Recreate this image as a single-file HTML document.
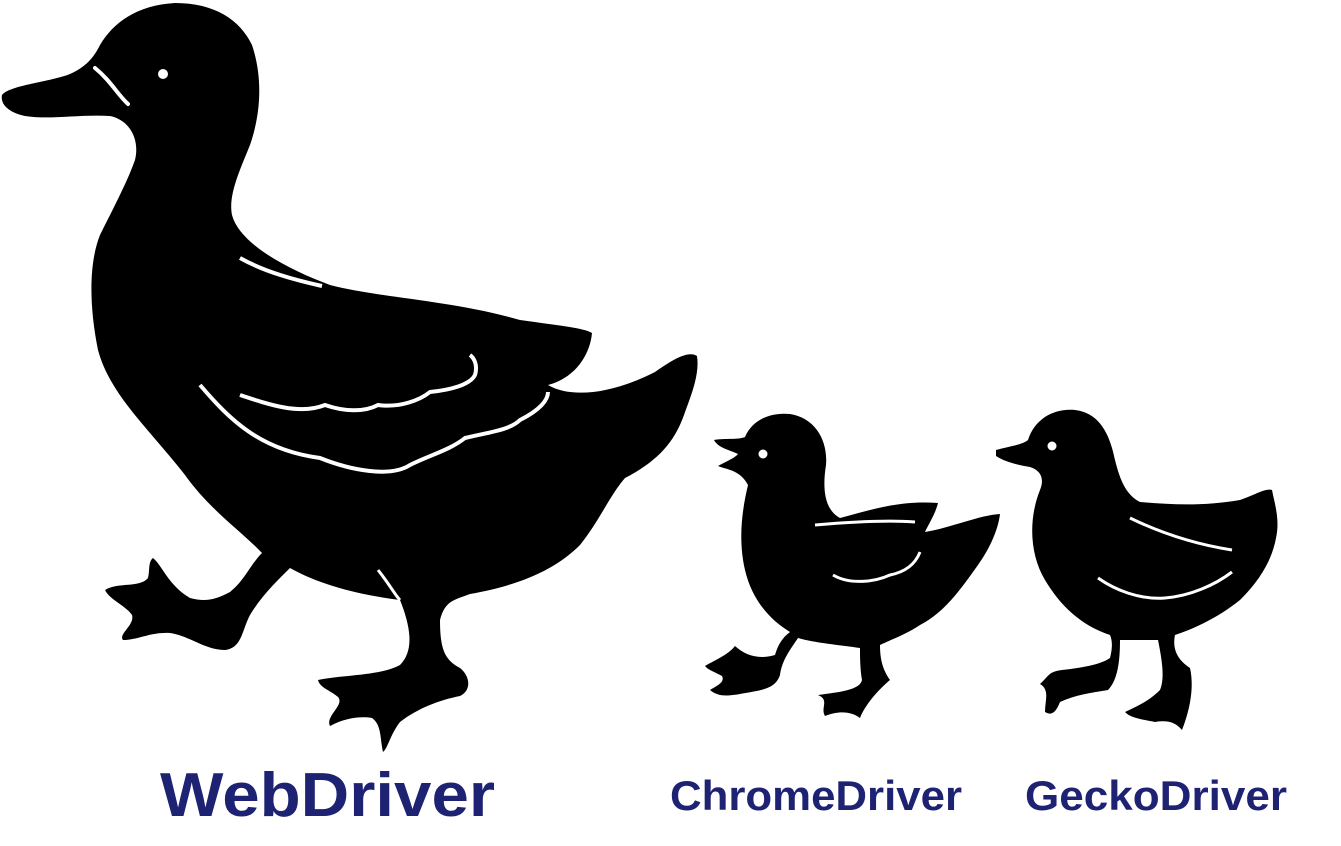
<!DOCTYPE html>
<html><head><meta charset="utf-8"><style>
html,body{margin:0;padding:0;background:#fff;width:1341px;height:846px;overflow:hidden}
svg{display:block}
</style></head><body>
<svg width="1341" height="846" viewBox="0 0 1341 846" xmlns="http://www.w3.org/2000/svg">
<!-- big duck -->
<path fill="#000" d="M2,95 C10,85 50,82 70,74 C88,66 95,55 100,45 C115,20 140,5 175,3 C215,3 240,20 252,45 C262,75 262,110 250,145 C240,170 228,195 232,215 C240,245 290,270 330,285 C380,298 450,300 520,320 C555,325 585,328 592,333 C590,355 575,378 548,385 C570,398 610,395 655,372 C672,360 688,350 697,356 C700,375 690,398 684,415 C675,440 660,460 625,478 C610,495 600,520 580,545 C555,570 520,585 470,594 C455,600 445,600 440,620 C440,650 445,660 460,668 C470,676 472,690 460,696 C440,700 418,708 400,722 C390,735 388,748 383,752 C380,740 382,725 372,718 C360,716 345,718 330,726 C325,716 345,705 338,697 C330,690 320,688 318,680 C340,675 380,676 400,665 C415,650 410,625 400,600 C360,595 320,585 290,568 C278,580 262,595 250,615 C242,630 242,648 225,650 C205,650 190,636 170,633 C150,632 138,640 123,640 C118,634 135,625 132,615 C125,605 110,600 105,590 C118,582 140,588 148,578 C150,570 148,562 153,558 C162,565 168,585 190,598 C205,602 215,600 230,592 C245,580 250,565 262,553 C240,530 210,510 185,475 C150,430 110,395 98,350 C88,300 90,260 100,235 C115,205 128,180 135,160 C140,140 130,120 110,116 C80,114 50,120 25,116 C10,113 0,105 2,95 Z"/>
<circle cx="163" cy="74" r="5" fill="#fff"/>
<path d="M95,68 C110,80 118,95 128,104" stroke="#fff" stroke-width="4" fill="none" stroke-linecap="round"/>
<path d="M240,258 C265,272 295,280 322,286" stroke="#fff" stroke-width="4" fill="none"/>
<path d="M200,385 C230,420 260,450 320,458 C350,470 390,478 410,465 C430,455 450,450 465,438 C490,432 510,430 520,420 C540,410 548,400 548,392" stroke="#fff" stroke-width="4" fill="none"/>
<path d="M240,395 C270,405 300,415 325,405 C345,412 365,412 378,405 C400,408 420,400 430,392 C450,390 470,385 475,375 C478,365 474,358 470,355" stroke="#fff" stroke-width="4" fill="none"/>
<path d="M378,570 C390,585 395,595 400,600" stroke="#fff" stroke-width="3" fill="none"/>
<!-- chick 1 -->
<path fill="#000" d="M714,440 C725,438 738,440 745,437 C752,420 770,412 790,414 C815,418 828,440 826,465 C822,490 825,510 840,518 C870,510 900,500 938,503 C935,515 928,525 925,532 C950,528 980,515 1000,514 C998,530 990,548 978,565 C960,590 945,612 920,625 C905,635 890,640 880,645 C880,660 883,670 890,680 C878,690 865,705 860,718 C852,712 840,710 825,716 C820,708 830,700 818,695 C840,692 860,690 862,680 C860,668 860,655 860,648 C840,645 815,643 798,638 C790,650 782,660 780,675 C775,690 760,690 740,694 C728,696 718,697 710,690 C718,685 725,682 722,676 C715,672 708,670 705,666 C715,660 728,655 735,646 C745,655 758,660 775,655 C778,645 782,638 790,632 C770,620 752,600 745,570 C738,540 742,510 748,485 C740,470 728,470 718,466 C725,462 735,458 738,454 C730,450 718,448 714,440 Z"/>
<circle cx="763" cy="454" r="4.5" fill="#fff"/>
<path d="M815,525 C850,522 890,520 915,522" stroke="#fff" stroke-width="3" fill="none"/>
<path d="M833,575 C850,585 875,582 890,575 C905,572 915,565 920,552" stroke="#fff" stroke-width="3" fill="none"/>
<!-- chick 2 -->
<path fill="#000" d="M996,450 C1010,446 1022,445 1028,440 C1035,418 1055,408 1075,410 C1100,413 1110,435 1115,460 C1120,480 1126,495 1140,502 C1175,505 1205,506 1240,500 C1255,495 1265,488 1272,490 C1275,505 1280,520 1276,538 C1272,560 1260,580 1240,600 C1215,620 1190,630 1175,635 C1172,650 1178,660 1190,668 C1195,690 1188,715 1182,730 C1175,722 1168,720 1155,722 C1145,720 1130,718 1125,712 C1140,705 1150,700 1160,690 C1165,678 1162,660 1158,640 C1145,640 1130,640 1120,640 C1120,660 1118,680 1108,690 C1090,693 1075,695 1060,702 C1055,715 1050,715 1045,712 C1045,700 1050,690 1040,684 C1050,675 1048,672 1062,670 C1080,668 1100,665 1110,658 C1112,650 1113,642 1110,635 C1080,625 1060,605 1045,580 C1030,555 1028,520 1040,490 C1045,478 1040,470 1030,467 C1018,465 1005,462 996,456 Z"/>
<circle cx="1052" cy="446" r="4.5" fill="#fff"/>
<path d="M1130,518 C1165,535 1200,545 1232,550" stroke="#fff" stroke-width="3" fill="none"/>
<path d="M1098,578 C1115,590 1140,600 1165,598 C1190,596 1215,585 1232,572" stroke="#fff" stroke-width="3" fill="none"/>
<!-- text -->
<g fill="#1e2272" font-family="'Liberation Sans', sans-serif" font-weight="bold">
<text x="160" y="816" font-size="62" textLength="335" lengthAdjust="spacingAndGlyphs">WebDriver</text>
<text x="670" y="810" font-size="42" textLength="292" lengthAdjust="spacingAndGlyphs">ChromeDriver</text>
<text x="1025" y="810" font-size="42" textLength="262" lengthAdjust="spacingAndGlyphs">GeckoDriver</text>
</g>
</svg>
</body></html>
